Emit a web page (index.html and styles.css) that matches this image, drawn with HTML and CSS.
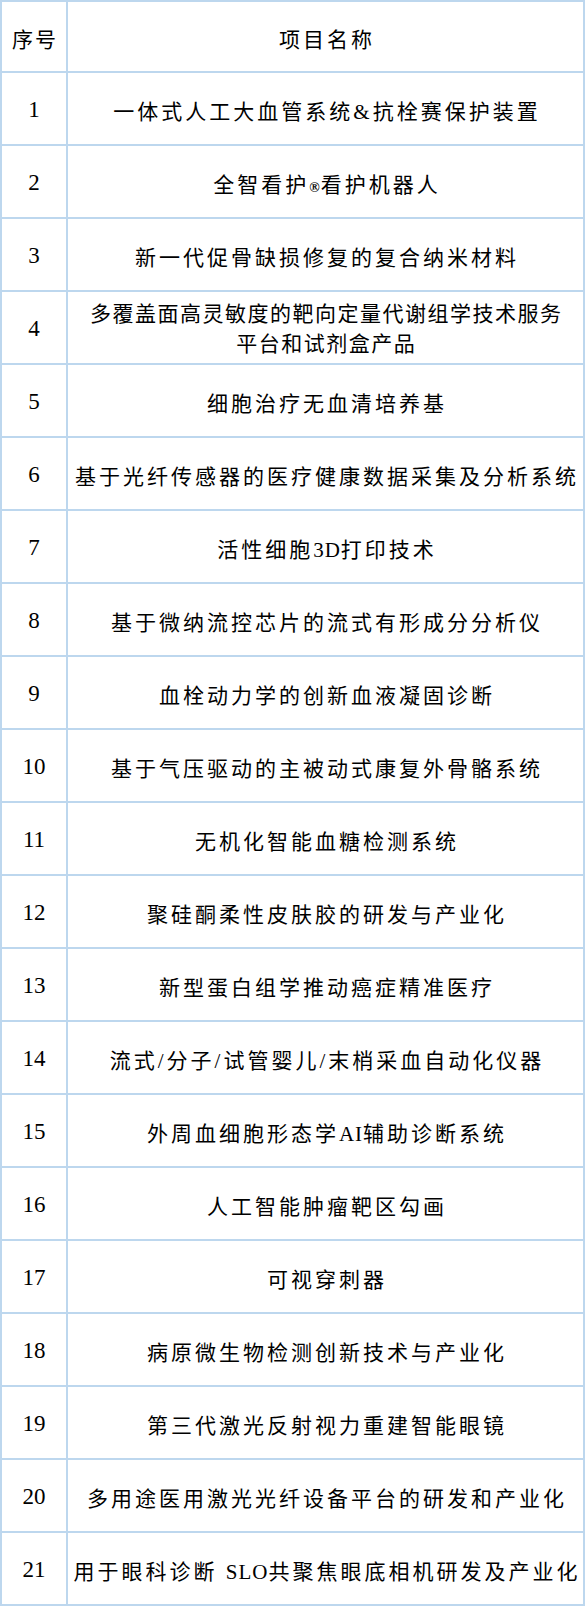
FILE: index.html
```html
<!DOCTYPE html>
<html lang="zh-CN">
<head>
<meta charset="utf-8">
<title>项目名称</title>
<link rel="stylesheet" href="styles.css">
</head>
<body>
<div class="table">
  <div class="row head"><div class="c1">序号</div><div class="c2">项目名称</div></div>
  <div class="row"><div class="c1">1</div><div class="c2">一体式人工大血管系统&amp;抗栓赛保护装置</div></div>
  <div class="row"><div class="c1">2</div><div class="c2"><span class="t">全智看护<span class="reg">®</span>看护机器人</span></div></div>
  <div class="row"><div class="c1">3</div><div class="c2">新一代促骨缺损修复的复合纳米材料</div></div>
  <div class="row"><div class="c1">4</div><div class="c2 two"><span class="line">多覆盖面高灵敏度的靶向定量代谢组学技术服务</span><span class="line">平台和试剂盒产品</span></div></div>
  <div class="row"><div class="c1">5</div><div class="c2">细胞治疗无血清培养基</div></div>
  <div class="row"><div class="c1">6</div><div class="c2">基于光纤传感器的医疗健康数据采集及分析系统</div></div>
  <div class="row"><div class="c1">7</div><div class="c2"><span class="t">活性细胞<span class="lat">3D</span>打印技术</span></div></div>
  <div class="row"><div class="c1">8</div><div class="c2">基于微纳流控芯片的流式有形成分分析仪</div></div>
  <div class="row"><div class="c1">9</div><div class="c2">血栓动力学的创新血液凝固诊断</div></div>
  <div class="row"><div class="c1">10</div><div class="c2">基于气压驱动的主被动式康复外骨骼系统</div></div>
  <div class="row"><div class="c1">11</div><div class="c2">无机化智能血糖检测系统</div></div>
  <div class="row"><div class="c1">12</div><div class="c2">聚硅酮柔性皮肤胶的研发与产业化</div></div>
  <div class="row"><div class="c1">13</div><div class="c2">新型蛋白组学推动癌症精准医疗</div></div>
  <div class="row"><div class="c1">14</div><div class="c2">流式/分子/试管婴儿/末梢采血自动化仪器</div></div>
  <div class="row"><div class="c1">15</div><div class="c2"><span class="t">外周血细胞形态学<span class="lat">AI</span>辅助诊断系统</span></div></div>
  <div class="row"><div class="c1">16</div><div class="c2">人工智能肿瘤靶区勾画</div></div>
  <div class="row"><div class="c1">17</div><div class="c2">可视穿刺器</div></div>
  <div class="row"><div class="c1">18</div><div class="c2">病原微生物检测创新技术与产业化</div></div>
  <div class="row"><div class="c1">19</div><div class="c2">第三代激光反射视力重建智能眼镜</div></div>
  <div class="row"><div class="c1">20</div><div class="c2">多用途医用激光光纤设备平台的研发和产业化</div></div>
  <div class="row"><div class="c1">21</div><div class="c2"><span class="t">用于眼科诊断 <span class="lat">SLO</span>共聚焦眼底相机研发及产业化</span></div></div>
</div>
</body>
</html>
```

FILE: styles.css
```css
html, body {
  margin: 0;
  padding: 0;
  background: #ffffff;
}

body {
  font-family: "Liberation Serif", "Noto Sans CJK SC", serif;
  font-size: 21px;
  color: #000000;
}

.table {
  width: 585px;
  border-top: 2px solid #bdd7ee;
  border-left: 2px solid #bdd7ee;
  box-sizing: border-box;
}

.row {
  display: flex;
  height: 73px;
  border-bottom: 2px solid #bdd7ee;
  box-sizing: border-box;
}

.row.head {
  height: 71px;
}

.c1,
.c2 {
  display: flex;
  align-items: center;
  justify-content: center;
  border-right: 2px solid #bdd7ee;
  box-sizing: border-box;
  white-space: nowrap;
  padding-top: 3px;
}

.c1 {
  width: 66px;
  flex: none;
  font-size: 23px;
}

.c2 {
  flex: 1;
  letter-spacing: 3px;
  padding-left: 3px;
}

.head .c1 {
  font-size: 21px;
  letter-spacing: 2px;
  padding-left: 2px;
}

.c2.two {
  flex-direction: column;
  line-height: 30px;
  letter-spacing: 1.5px;
  padding-left: 1.5px;
}

.line {
  display: block;
}

.lat {
  letter-spacing: 1px;
}

.reg {
  font-size: 14px;
  font-weight: bold;
  letter-spacing: 1px;
}
```
